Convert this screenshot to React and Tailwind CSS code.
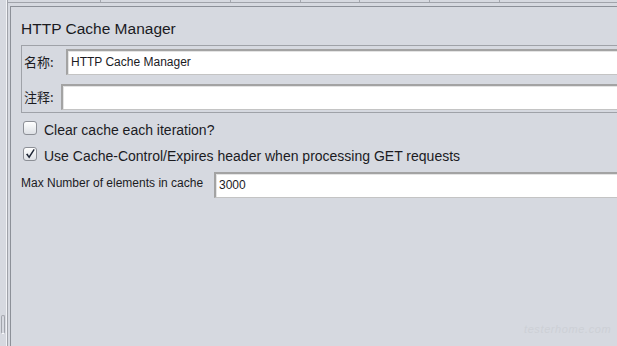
const ticks = [100, 230, 300, 359, 429, 499];

function Field({ children, className = "" }) {
  return (
    <div
      className={`flex-1 h-[26px] bg-white border-t-2 border-l-2 border-b border-[#a3a3a3] border-b-[#c4c4c4] shadow-[inset_1px_1px_0_#e4e4e4] pl-[3px] pt-[4px] text-[12px] leading-[14px] whitespace-nowrap ${className}`}
    >
      {children}
    </div>
  );
}

function CheckBox({ checked }) {
  return (
    <div className="ml-[2px] mt-[3px] w-[14px] h-[14px] shrink-0 rounded-[3px] border border-[#8c8f96] bg-linear-to-b from-white to-[#dde0e5] flex items-center justify-center">
      {checked && (
        <svg width="12" height="12" viewBox="0 0 12 12">
          <path d="M2 6.2 L3.6 5.4 L5 8 L9.6 1 L10.8 1.8 L5.2 10.6 Z" fill="#1d2535" />
        </svg>
      )}
    </div>
  );
}

export default function App() {
  return (
    <div className="relative w-[617px] h-[346px] overflow-hidden bg-[#d6d9e0] flex font-['Liberation_Sans',Arial,sans-serif] text-[#1b1b1f]">
      {/* marcas de columnas de la tabla superior */}
      {ticks.map((x) => (
        <span key={x} className="absolute top-0 w-px h-[2px] bg-[#a4a7ae]" style={{ left: x }} />
      ))}

      {/* barra lateral con el pulgar del scroll */}
      <div className="w-[6px] flex flex-col justify-end pb-[12px]">
        <div className="ml-px w-[4px] h-[19px] rounded-[2px] border border-[#a2a5ac] border-b-white" />
      </div>
      <div className="w-px bg-[#f2f3f6]" />

      <div className="flex-1 flex flex-col border-l border-[#a0a3aa]">
        <div className="h-[2px]" />
        <div className="h-px bg-[#a0a3aa]" />
        <div className="h-[3px]" />

        <div className="flex-1 ml-[2px] border-l border-t border-[#8c9098] pl-[10px] pt-[13px] flex flex-col">
          <h1 className="text-[15.5px] leading-[18px] whitespace-nowrap">HTTP Cache Manager</h1>

          {/* nombre y comentario */}
          <div className="mt-[7px] border border-r-0 border-[#9fa2a8] pl-px pt-[3px] pb-[2px] flex flex-col gap-[9px]">
            <div className="flex items-center">
              <span className="w-[43px] pl-px text-[13px] font-['Noto_Sans_CJK_SC',sans-serif] leading-[16px]">名称:</span>
              <Field>HTTP Cache Manager</Field>
            </div>
            <div className="flex items-center">
              <span className="w-[38px] pl-px text-[13px] font-['Noto_Sans_CJK_SC',sans-serif] leading-[16px]">注释:</span>
              <Field />
            </div>
          </div>

          {/* opciones */}
          <div className="mt-[5px] h-[26px] flex items-start gap-[7px]">
            <CheckBox />
            <span className="mt-[4px] text-[14px] leading-[16px] whitespace-nowrap">Clear cache each iteration?</span>
          </div>
          <div className="h-[26px] flex items-start gap-[7px]">
            <CheckBox checked />
            <span className="mt-[4px] text-[14px] leading-[16px] whitespace-nowrap">
              Use Cache-Control/Expires header when processing GET requests
            </span>
          </div>

          <div className="mt-[2px] flex items-start">
            <span className="w-[193px] mt-[4px] text-[12px] leading-[14px] whitespace-nowrap">Max Number of elements in cache</span>
            <Field className="h-[25px]">3000</Field>
          </div>
        </div>
      </div>

      {/* marca de agua */}
      <span className="absolute left-[524px] top-[322px] text-[11px] leading-[14px] italic tracking-[0.6px] text-[#cdd0d6] whitespace-nowrap">
        testerhome.com
      </span>
    </div>
  );
}
